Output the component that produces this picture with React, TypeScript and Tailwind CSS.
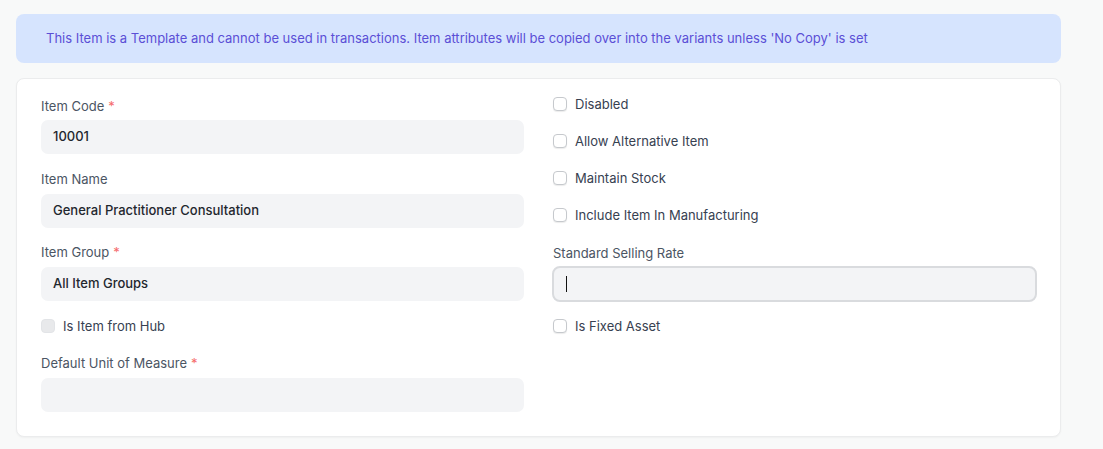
import React from "react";

const font = { fontFamily: "Inter, 'Noto Sans', sans-serif" };

function Label({ text, req, mb = "mb-[7px]" }: { text: string; req?: boolean; mb?: string }) {
  return (
    <div className={"h-4 text-[13px] leading-4 text-[#4b5563] " + mb}>
      {text}
      {req && <span className="text-[#f56b6b] ml-[4px]">*</span>}
    </div>
  );
}

function Input({ value }: { value?: string }) {
  return (
    <div className="h-[34px] rounded-[7px] bg-[#f3f4f6] px-3 flex items-center text-[13px] font-medium text-[#1f272e]">
      {value}
    </div>
  );
}

function Check({ text, disabled }: { text: string; disabled?: boolean }) {
  return (
    <div className="h-4 flex items-center gap-[8px] text-[13px] leading-4 text-[#374151]">
      {disabled ? (
        <span className="shrink-0 w-[14px] h-[14px] rounded-[4px] bg-[#e8e9eb] border border-[#e2e4e7]" />
      ) : (
        <span className="shrink-0 w-[14px] h-[14px] rounded-[4px] bg-white border border-[#c6c9cd] shadow-[0_1px_1px_rgba(0,0,0,0.08)]" />
      )}
      <span>{text}</span>
    </div>
  );
}

export default function App() {
  return (
    <div className="w-[1103px] h-[449px] bg-[#f8f9f9] pt-[14px] pl-4 pr-[42px]" style={font}>
      <div className="h-[49px] rounded-[8px] bg-[#d6e4fe] flex items-center pl-[30px] text-[13px] text-[#5b4fd6]">
        This Item is a Template and cannot be used in transactions. Item attributes will be copied over into the variants unless 'No Copy' is set
      </div>
      <div className="mt-[15px] h-[359px] rounded-[8px] bg-white border border-[#ebeced] shadow-[0_1px_2px_rgba(0,0,0,0.04)] pl-6 pr-[23px] pt-[19px] grid grid-cols-2 gap-[30px]">
        <div className="flex flex-col">
          <Label text="Item Code" req mb="mb-[6px]" />
          <Input value="10001" />
          <div className="h-[17px]" />
          <Label text="Item Name" />
          <Input value="General Practitioner Consultation" />
          <div className="h-[16px]" />
          <Label text="Item Group" req />
          <Input value="All Item Groups" />
          <div className="h-[17px]" />
          <Check text="Is Item from Hub" disabled />
          <div className="h-[21px]" />
          <Label text="Default Unit of Measure" req />
          <Input />
        </div>
        <div className="flex flex-col -mt-[2px] -ml-[1px]">
          <Check text="Disabled" />
          <div className="h-[21px]" />
          <Check text="Allow Alternative Item" />
          <div className="h-[21px]" />
          <Check text="Maintain Stock" />
          <div className="h-[21px]" />
          <Check text="Include Item In Manufacturing" />
          <div className="h-[22px]" />
          <Label text="Standard Selling Rate" mb="mb-[5px]" />
          <div className="-ml-[1px] h-[36px] rounded-[8px] bg-[#f3f4f6] border-2 border-[#d9dbde] flex items-center pl-[12px]">
            <span className="w-[1px] h-[16px] bg-[#111]" />
          </div>
          <div className="h-[16px]" />
          <Check text="Is Fixed Asset" />
        </div>
      </div>
    </div>
  );
}
